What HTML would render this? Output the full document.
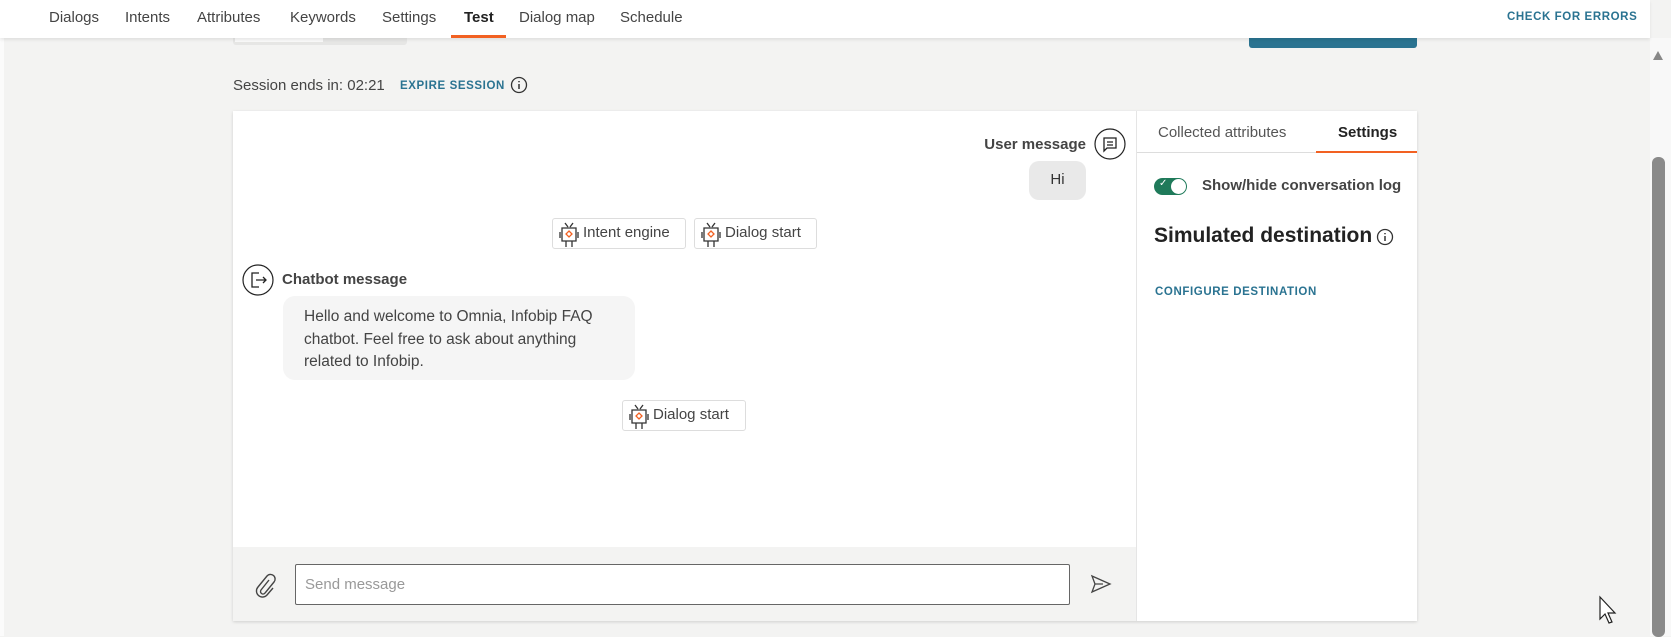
<!DOCTYPE html>
<html><head><meta charset="utf-8"><style>
*{box-sizing:border-box;margin:0;padding:0}
body{width:1671px;height:636px;overflow:hidden;background:#f3f3f2;font-family:"Liberation Sans",sans-serif;color:#3a3a3a;position:relative}
.a{position:absolute;white-space:nowrap}
.nav{position:absolute;left:0;top:0;width:1650px;height:38px;background:#fff;box-shadow:0 2px 3px rgba(0,0,0,.08);z-index:2}
.nav .a{top:9px;font-size:15px;color:#444}
.link{color:#2a7391;font-weight:bold;font-size:11.5px;letter-spacing:.6px}
.nav .a.link{color:#2a7391;font-size:11.5px;top:11px}
.panel{position:absolute;left:233px;top:111px;width:1184px;height:510px;background:#fff;box-shadow:0 1px 3px rgba(0,0,0,.15)}
.chip{position:absolute;height:31px;border:1px solid #ddd;border-radius:3px;background:#fff;font-size:15px;color:#444;padding:5px 8px 0 30px}
.chip svg{position:absolute;left:5px;top:3px}
</style></head><body>
<div class="nav">
<span class="a" style="left:49px">Dialogs</span>
<span class="a" style="left:125px">Intents</span>
<span class="a" style="left:197px">Attributes</span>
<span class="a" style="left:290px">Keywords</span>
<span class="a" style="left:382px">Settings</span>
<span class="a" style="left:464px;color:#222;font-weight:bold">Test</span>
<span class="a" style="left:519px">Dialog map</span>
<span class="a" style="left:620px">Schedule</span>
<div class="a" style="left:451px;top:35px;width:55px;height:3px;background:#f26122"></div>
<span class="a link" style="left:1507px">CHECK FOR ERRORS</span>
</div>
<div class="a" style="left:233px;top:38px;width:174px;height:7px;background:#e6e6e5;border-radius:0 0 3px 3px"></div>
<div class="a" style="left:235px;top:38px;width:88px;height:4px;background:#fafafa"></div>
<div class="a" style="left:1249px;top:38px;width:168px;height:10px;background:#2a7391;border-radius:0 0 3px 3px"></div>
<div class="a" style="left:0;top:38px;width:4px;height:598px;background:#fbfbfb"></div>
<span class="a" style="left:233px;top:77px;font-size:15px;color:#444">Session ends in: 02:21</span>
<span class="a link" style="left:400px;top:80px">EXPIRE SESSION</span>
<svg class="a" style="left:510px;top:76px" width="18" height="18" viewBox="0 0 18 18"><circle cx="9" cy="9" r="7.5" fill="none" stroke="#333" stroke-width="1.3"/><path d="M9 8v5M9 5v1.2" stroke="#333" stroke-width="1.5"/></svg>

<div class="panel">
<div class="a" style="left:903px;top:0;width:1px;height:510px;background:#e5e5e5"></div>
<span class="a" style="left:925px;top:13px;font-size:15px;color:#555">Collected attributes</span>
<span class="a" style="left:1105px;top:13px;font-size:15px;color:#222;font-weight:bold">Settings</span>
<div class="a" style="left:904px;top:41px;width:280px;height:1px;background:#ddd"></div>
<div class="a" style="left:1083px;top:40px;width:101px;height:2px;background:#f26122"></div>
<div class="a" style="left:921px;top:67px;width:33px;height:17px;border-radius:9px;background:#1f7a5a"></div>
<div class="a" style="left:938px;top:68px;width:15px;height:15px;border-radius:50%;background:#fff"></div>
<span class="a" style="left:926px;top:67px;color:#fff;font-size:10px">✓</span>
<span class="a" style="left:969px;top:66px;font-size:15px;font-weight:bold;color:#444">Show/hide conversation log</span>
<span class="a" style="left:921px;top:113px;font-size:21px;font-weight:bold;color:#222">Simulated destination</span>
<svg class="a" style="left:1143px;top:117px" width="18" height="18" viewBox="0 0 18 18"><circle cx="9" cy="9" r="7.5" fill="none" stroke="#333" stroke-width="1.3"/><path d="M9 8v5M9 5v1.2" stroke="#333" stroke-width="1.5"/></svg>
<span class="a link" style="left:922px;top:175px">CONFIGURE DESTINATION</span>

<span class="a" style="right:331px;top:25px;font-size:15px;font-weight:bold;color:#444">User message</span>
<svg class="a" style="left:861px;top:17px" width="32" height="32" viewBox="0 0 32 32"><circle cx="16" cy="16" r="15" fill="#fff" stroke="#222" stroke-width="1.2"/><path d="M10 10h12v10h-9l-3 3z M13 14h6M13 17h6" fill="none" stroke="#222" stroke-width="1.3"/></svg>
<div class="a" style="left:796px;top:50px;width:57px;height:39px;background:#e9e9e9;border-radius:10px;font-size:15px;text-align:center;padding-top:10px;color:#333">Hi</div>

<div class="chip" style="left:319px;top:107px;width:134px">Intent engine<svg width="22" height="26" viewBox="0 0 22 26"><path d="M7 1l3 4M15 1l-3 4M4 6h14v13H4zM2 10v6M20 10v6M8 19v6M14 19v6" fill="none" stroke="#333" stroke-width="1.3"/><path d="M11 9l3 3-3 3-3-3z" fill="none" stroke="#f26122" stroke-width="1.3"/></svg></div>
<div class="chip" style="left:461px;top:107px;width:123px">Dialog start<svg width="22" height="26" viewBox="0 0 22 26"><path d="M7 1l3 4M15 1l-3 4M4 6h14v13H4zM2 10v6M20 10v6M8 19v6M14 19v6" fill="none" stroke="#333" stroke-width="1.3"/><path d="M11 9l3 3-3 3-3-3z" fill="none" stroke="#f26122" stroke-width="1.3"/></svg></div>

<svg class="a" style="left:9px;top:153px" width="32" height="32" viewBox="0 0 32 32"><circle cx="16" cy="16" r="15" fill="#fff" stroke="#222" stroke-width="1.2"/><path d="M17 9h-7v14h7M14 16h10M21 13l3 3-3 3" fill="none" stroke="#222" stroke-width="1.3"/></svg>
<span class="a" style="left:49px;top:160px;font-size:15px;font-weight:bold;color:#444">Chatbot message</span>
<div class="a" style="left:50px;top:185px;width:352px;height:84px;background:#f5f5f5;border-radius:12px;padding:10px 0 0 21px;font-size:15.5px;line-height:22.5px;color:#444;white-space:normal">Hello and welcome to Omnia, Infobip FAQ<br>chatbot. Feel free to ask about anything<br>related to Infobip.</div>

<div class="chip" style="left:389px;top:289px;width:124px">Dialog start<svg width="22" height="26" viewBox="0 0 22 26"><path d="M7 1l3 4M15 1l-3 4M4 6h14v13H4zM2 10v6M20 10v6M8 19v6M14 19v6" fill="none" stroke="#333" stroke-width="1.3"/><path d="M11 9l3 3-3 3-3-3z" fill="none" stroke="#f26122" stroke-width="1.3"/></svg></div>

<div class="a" style="left:0;top:436px;width:903px;height:74px;background:#f3f3f2"></div>
<div class="a" style="left:62px;top:453px;width:775px;height:41px;background:#fff;border:1px solid #666;border-radius:2px;font-size:15px;color:#999;padding:11px 0 0 9px">Send message</div>
<svg class="a" style="left:20px;top:461px" width="24" height="26" viewBox="0 0 24 26"><path d="M16 8l-8 10a2.5 2.5 0 0 0 4 3l9-11a4.5 4.5 0 0 0-7-6L5 15a6 6 0 0 0 9 8l6-7" fill="none" stroke="#444" stroke-width="1.4"/></svg>
<svg class="a" style="left:857px;top:462px" width="22" height="22" viewBox="0 0 22 22"><path d="M2 3l18 8-18 8 3-8zM5 11h8" fill="none" stroke="#444" stroke-width="1.3"/></svg>
</div>

<div class="a" style="left:1650px;top:38px;width:21px;height:598px;background:#f8f8f8"></div>
<svg class="a" style="left:1650px;top:48px" width="16" height="14"><path d="M3 12l5-9 5 9z" fill="#888"/></svg>
<div class="a" style="left:1652px;top:157px;width:13px;height:480px;background:#8a8a8a;border-radius:6px"></div>
<svg class="a" style="left:1598px;top:595px" width="22" height="30" viewBox="0 0 22 30"><path d="M2 2v22l5-5 4 9 3-1-4-9h7z" fill="#fff" stroke="#222" stroke-width="1.2"/></svg>
</body></html>
